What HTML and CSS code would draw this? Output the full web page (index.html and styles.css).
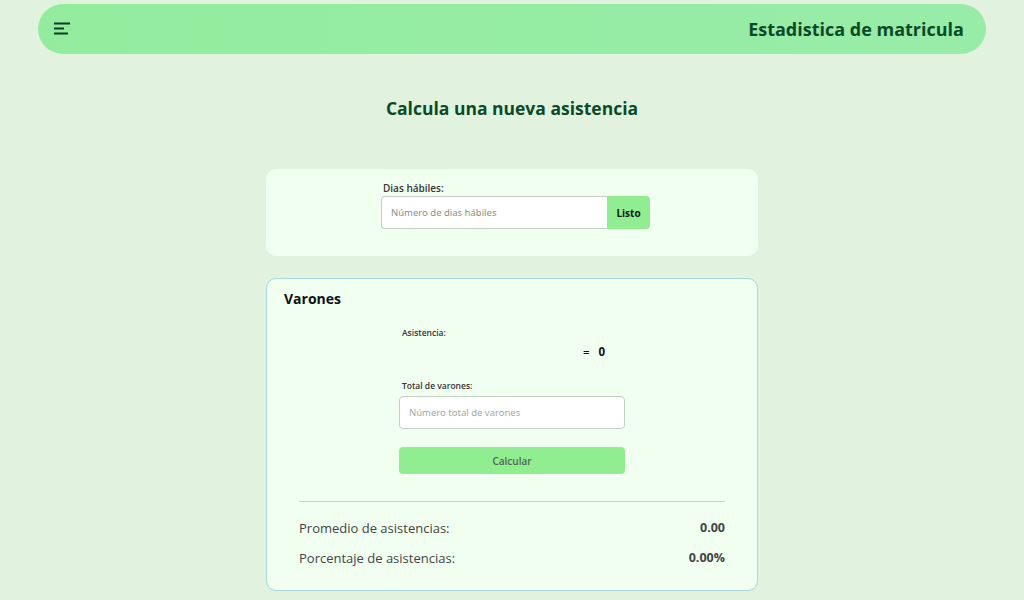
FILE: index.html
```html
<!DOCTYPE html>
<html lang="es">
<head>
<meta charset="utf-8">
<title>Estadistica de matricula</title>
<link rel="stylesheet" href="styles.css">
</head>
<body>
<header class="topbar">
  <button class="menu-btn" aria-label="Menú">
    <svg width="16" height="14" viewBox="0 0 16 14"><path d="M0 1.5h16M0 6.5h10M0 11.5h14" stroke="#0b3d24" stroke-width="2" fill="none"/></svg>
  </button>
  <h1 class="brand">Estadistica de matricula</h1>
</header>
<main class="main">
  <h2 class="page-title">Calcula una nueva asistencia</h2>
  <section class="card card-days">
    <div class="days-form">
      <label class="field-label">Dias hábiles:</label>
      <div class="input-group">
        <input class="text-input group-input" type="text" placeholder="Número de dias hábiles">
        <button class="btn-listo">Listo</button>
      </div>
    </div>
  </section>
  <section class="card card-calc">
    <h3 class="card-title">Varones</h3>
    <div class="calc-form">
      <label class="small-label">Asistencia:</label>
      <div class="result-row"><span class="eq">=</span><span class="res">0</span></div>
      <label class="small-label">Total de varones:</label>
      <input class="text-input full-input" type="text" placeholder="Número total de varones">
      <button class="btn-calc">Calcular</button>
    </div>
    <div class="stats">
      <div class="stat-row"><span>Promedio de asistencias:</span><strong>0.00</strong></div>
      <div class="stat-row"><span>Porcentaje de asistencias:</span><strong>0.00%</strong></div>
    </div>
  </section>
</main>
</body>
</html>
```
FILE: styles.css
```css
* { box-sizing: border-box; }
html, body { margin: 0; padding: 0; }
body {
  background: #e1f3de;
  font-family: "Open Sans", "Noto Sans", sans-serif;
  color: #222;
  height: 600px;
  overflow: hidden;
}
.topbar {
  margin: 4px 38px 0;
  height: 50px;
  border-radius: 25px;
  background: linear-gradient(90deg, #93ec9e, #98eca8);
  display: flex;
  align-items: center;
  justify-content: space-between;
  padding: 0 22px 0 16px;
}
.menu-btn {
  background: none;
  border: none;
  padding: 0;
  width: 16px;
  height: 14px;
  display: flex;
  cursor: pointer;
}
.brand {
  margin: 0;
  font-size: 18px;
  font-weight: 700;
  color: #0b4a28;
}
.main {
  display: flex;
  flex-direction: column;
  align-items: center;
}
.page-title {
  margin: 41px 0 48px;
  font-size: 17.5px;
  font-weight: 700;
  color: #0b4a28;
  line-height: 26px;
}
.card {
  width: 492px;
  background: #f0fff0;
  border-radius: 10px;
}
.card-days {
  height: 87px;
  padding-top: 12px;
  display: flex;
  justify-content: center;
}
.days-form {
  width: 269px;
  margin-left: 7px;
}
.field-label {
  display: block;
  font-size: 10px;
  font-weight: 600;
  color: #333;
  margin: 0 0 1px 2px;
  line-height: 14px;
}
.input-group {
  display: flex;
  height: 33px;
}
.text-input {
  font-family: "Noto Sans", "Open Sans", sans-serif;
  font-size: 9.5px;
  border: 1px solid #c4cfc4;
  background: #fff;
  padding: 0 9px;
  outline: none;
}
.text-input::placeholder { color: #8a8f8a; }
.group-input {
  flex: 1;
  border-radius: 4px 0 0 4px;
  border-right: none;
}
.btn-listo {
  width: 43px;
  border: none;
  background: #90ee90;
  border-radius: 0 4px 4px 0;
  font-family: "Open Sans", sans-serif;
  font-weight: 700;
  font-size: 10px;
  color: #111;
  padding: 0;
}
.card-calc {
  margin-top: 22px;
  height: 313px;
  border: 1px solid #a9d7dc;
  padding: 10px 17px 0;
}
.card-title {
  margin: 0;
  font-size: 14px;
  font-weight: 700;
  color: #111;
  line-height: 20px;
}
.calc-form {
  width: 226px;
  margin: 0 auto 0;
  padding-top: 18px;
  display: flex;
  flex-direction: column;
}
.small-label {
  font-size: 8.5px;
  font-weight: 600;
  color: #333;
  line-height: 12px;
  margin-left: 3px;
}
.result-row {
  height: 22px;
  display: flex;
  align-items: center;
  margin: 1px 0 18px;
  padding-left: 184px;
  font-size: 11.5px;
  font-weight: 700;
  color: #111;
}
.eq { font-weight: 600; margin-right: 9px; }
.full-input {
  height: 33px;
  margin-top: 4px;
  border-radius: 4px;
}
.text-input.full-input::placeholder { color: #a3a8a3; }
.btn-calc {
  margin-top: 18px;
  height: 27px;
  border: none;
  border-radius: 4px;
  background: #90ee90;
  font-family: "Open Sans", sans-serif;
  font-size: 10px;
  font-weight: 600;
  color: #566356;
}
.stats {
  margin: 27px 15px 0;
  border-top: 1px solid #b9d6d2;
  padding-top: 17px;
}
.stat-row {
  display: flex;
  justify-content: space-between;
  font-size: 13px;
  color: #444;
  line-height: 18px;
  margin-bottom: 12px;
}
.stat-row strong { font-weight: 700; color: #444; font-size: 12.5px; }
```
